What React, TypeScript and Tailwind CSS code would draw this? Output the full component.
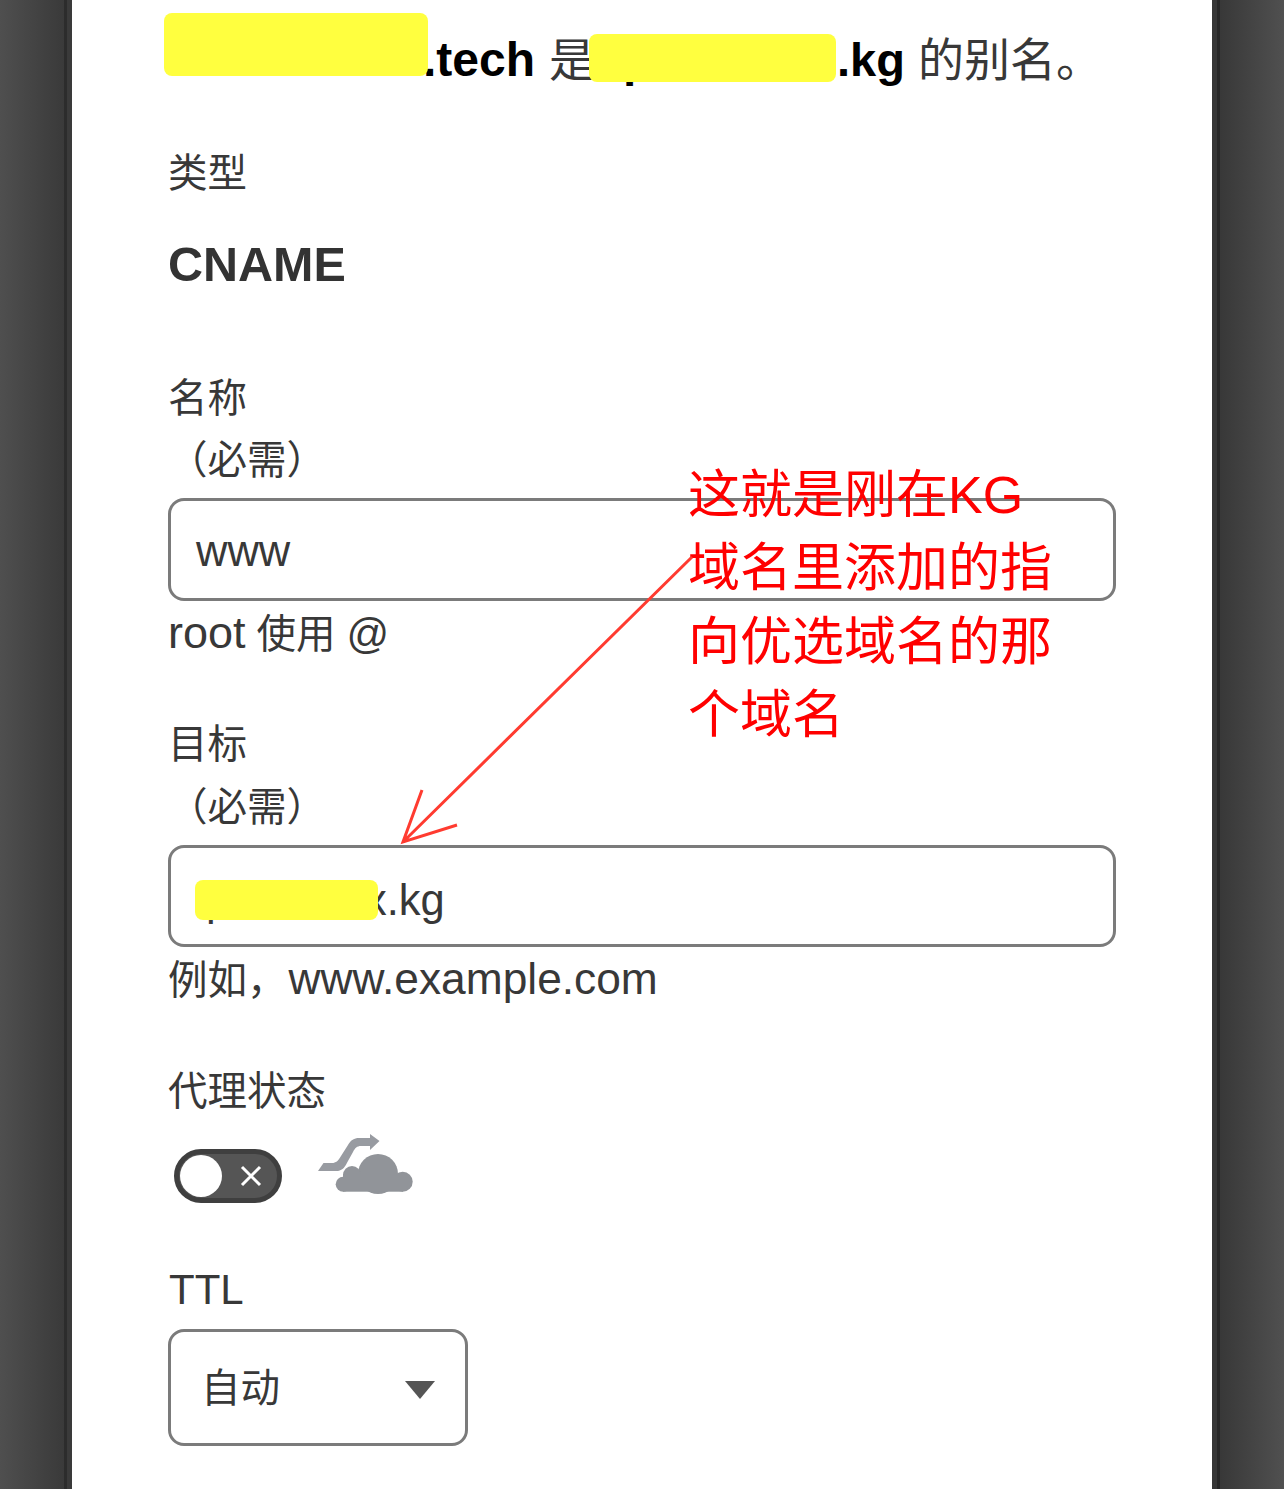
import { FunctionComponent, ReactNode } from "react";

const fontStack = `"Liberation Sans", "Noto Sans CJK SC", sans-serif`;

const Label: FunctionComponent<{ children: ReactNode; className?: string }> = ({
  children,
  className = "",
}) => <div className={`h-[62px] leading-[62px] text-[39.5px] text-[#383838] ${className}`}>{children}</div>;

const TextBox: FunctionComponent<{ children: ReactNode; className: string }> = ({ children, className }) => (
  <div
    className={`w-[948px] box-border rounded-[16px] border-[3px] border-solid border-[#7b7b7b] pl-[25px] flex items-center text-[43.5px] text-[#383838] ${className}`}
  >
    {children}
  </div>
);

const App: FunctionComponent = () => {
  return (
    <div className="relative h-[1489px] w-[1284px] overflow-hidden flex" style={{ fontFamily: fontStack }}>
      {/* dimmed page, left */}
      <div className="w-[64px] h-full bg-gradient-to-r from-[#4f4f4f] to-[#3a3a3a]" />
      <div className="w-[3px] h-full bg-[#2c2c2c]" />
      <div className="w-[5px] h-full bg-[#3a3a3a]" />

      {/* modal */}
      <div className="w-[1140px] h-full bg-white pl-[96px] pt-[29px]">
        <div className="h-[62px] leading-[62px] text-[48px] text-black whitespace-nowrap flex">
          <span className="w-[255px]" />
          <span className="font-bold">.tech</span>
          <span className="ml-[14px] text-[46px] text-[#383838]">是</span>
          <span className="w-[246px] ml-[-4px] pl-[32px] font-bold">p</span>
          <span className="font-bold text-[47px]">.kg</span>
          <span className="ml-[13px] text-[46px] text-[#383838]">的别名。</span>
        </div>

        <Label className="mt-[50px] pt-px">类型</Label>
        <div className="mt-[30px] h-[62px] leading-[62px] text-[48.5px] font-bold text-[#333]">CNAME</div>

        <Label className="mt-[71px] pt-px">名称</Label>
        <Label className="pt-px">（必需）</Label>
        <div className="mt-[8px]">
          <TextBox className="h-[103px] pt-[5px]">www</TextBox>
        </div>
        <Label className="mt-px">
          <span className="text-[45px]">root</span> 使用 <span className="text-[42px]">@</span>
        </Label>

        <Label className="mt-[49px]">目标</Label>
        <Label className="pt-px">（必需）</Label>
        <div className="mt-[8px]">
          <TextBox className="h-[102px] pt-[10px]">
            <span className="w-[169px] pl-[10px]">p</span>
            x.kg
          </TextBox>
        </div>
        <Label className="mt-px">
          例如，<span className="ml-[2px] text-[44.3px]">www.example.com</span>
        </Label>

        <Label className="mt-[49px] pt-px">代理状态</Label>
        <div className="mt-[28px] h-[54px] flex items-center gap-[36px] pl-[6px]">
          <div className="w-[108px] h-[54px] box-border rounded-full border-[5px] border-solid border-[#3f3f3f] bg-[#555] flex items-center justify-between pl-px pr-[15px]">
            <div className="w-[42px] h-[42px] rounded-full bg-white" />
            <svg width="22" height="22" viewBox="0 0 22 22" fill="none" stroke="#fff" strokeWidth="3">
              <path d="M2 2 L20 20 M20 2 L2 20" />
            </svg>
          </div>
          <svg width="96" height="64" viewBox="0 0 96 64" fill="#919499" className="self-start mt-[-19px]">
            <path
              d="M0 41 L5.5 33 H14 C18 33 20 31 23 26 L30 15 C33 10 36 8 41 8 H52 V4 L61.5 11 L52 20 V16 H43 C39 16 37 18 35 22 L30 31 C27 37 25 40 20 41 Z"
              fill="#989ba1"
            />
            <circle cx="60" cy="44" r="20" />
            <circle cx="34" cy="45" r="9" />
            <circle cx="25.2" cy="54.2" r="7.5" />
            <circle cx="84.7" cy="51.7" r="10" />
            <rect x="25" y="44" width="60" height="17.7" />
          </svg>
        </div>

        <div className="mt-[56px] pl-px h-[62px] leading-[62px] text-[42px] text-[#383838]">TTL</div>
        <div className="mt-[8px] w-[300px] h-[117px] box-border rounded-[16px] border-[3px] border-solid border-[#7b7b7b] pl-[30px] pr-[30px] flex items-center justify-between text-[39.5px] text-[#383838]">
          <span className="mt-[2px]">自动</span>
          <span className="mt-[4px] w-0 h-0 border-x-[15px] border-x-transparent border-t-[18px] border-t-[#555]" />
        </div>
      </div>

      {/* dimmed page, right */}
      <div className="w-[5px] h-full bg-[#363636]" />
      <div className="w-[3px] h-full bg-[#262626]" />
      <div className="flex-1 h-full bg-gradient-to-r from-[#383838] to-[#505050]" />

      {/* redaction marks */}
      <div className="absolute left-[164px] top-[13px] w-[264px] h-[63px] rounded-[8px] bg-[#ffff3f]" />
      <div className="absolute left-[589px] top-[34px] w-[247px] h-[48px] rounded-[8px] bg-[#ffff3f]" />
      <div className="absolute left-[195px] top-[880px] w-[183px] h-[40px] rounded-[8px] bg-[#ffff3f]" />

      {/* annotation */}
      <div className="absolute left-[688px] top-[459px] w-[370px] text-[52px] leading-[73.4px] text-[#f00]">
        这就是刚在KG域名里添加的指向优选域名的那个域名
      </div>
      <svg className="absolute left-0 top-0" width="1284" height="1489" fill="none" stroke="#ff3b30" strokeWidth="3">
        <path d="M692 557 L403 842 M422 790 L403 842 L457 825" />
      </svg>
    </div>
  );
};

export default App;
